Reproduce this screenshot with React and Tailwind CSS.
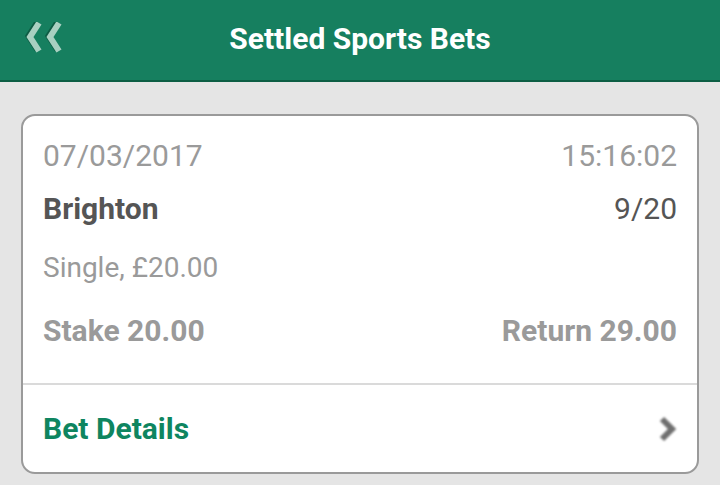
const BackIcon = () => (
  <svg width="40" height="32" viewBox="0 0 40 32" className="block">
    <g fill="none" strokeWidth="6" strokeLinecap="butt" strokeLinejoin="miter">
      <polyline points="15,1 6,15 15,29" stroke="#0d5c44" transform="translate(-1.5,-1)" />
      <polyline points="35,1 26,15 35,29" stroke="#0d5c44" transform="translate(-1.5,-1)" />
      <polyline points="15,1 6,15 15,29" stroke="#a9d0c1" />
      <polyline points="35,1 26,15 35,29" stroke="#a9d0c1" />
    </g>
  </svg>
)

const Chevron = () => (
  <svg width="26" height="32" viewBox="0 0 26 32" className="block">
    <polyline points="7,6 17,16 7,26" fill="none" stroke="#6f6f6f" strokeWidth="6" style={{ filter: 'blur(1.2px)' }} />
  </svg>
)

export default function App() {
  return (
    <div className="w-[720px] h-[485px] bg-[#e5e5e5] overflow-hidden" style={{ fontFamily: 'Roboto, "Liberation Sans", sans-serif' }}>
      <header className="h-[82px] bg-[#167f5f] border-b-2 border-[#0c5e44] flex items-center relative">
        <div className="absolute left-[24px] top-[22px]">
          <BackIcon />
        </div>
        <h1 className="w-full text-center text-white font-bold text-[30px] pb-1">Settled Sports Bets</h1>
      </header>

      <div className="px-[21px] pt-[32px]">
        <div className="bg-white border-2 border-[#9a9a9a] rounded-[14px] h-[360px] flex flex-col">
          <div className="px-[20px] pt-[23px] flex flex-col">
            <div className="flex justify-between text-[30px] text-[#9a9a9a] leading-[34px]">
              <span>07/03/2017</span>
              <span>15:16:02</span>
            </div>
            <div className="flex justify-between text-[30px] text-[#555] leading-[34px] mt-[19px]">
              <span className="font-bold">Brighton</span>
              <span>9/20</span>
            </div>
            <div className="text-[28px] text-[#9a9a9a] leading-[34px] mt-[25px]">Single, £20.00</div>
            <div className="flex justify-between text-[30px] font-bold text-[#9a9a9a] leading-[34px] mt-[29px]">
              <span>Stake 20.00</span>
              <span>Return 29.00</span>
            </div>
          </div>
          <div className="mt-[35px] border-t-2 border-[#dadada]" />
          <div className="flex-1 flex items-center justify-between px-[20px] pb-[0px]">
            <span className="text-[30px] font-bold text-[#0e8560]">Bet Details</span>
            <div className="-mr-[4px]">
              <Chevron />
            </div>
          </div>
        </div>
      </div>
    </div>
  )
}
